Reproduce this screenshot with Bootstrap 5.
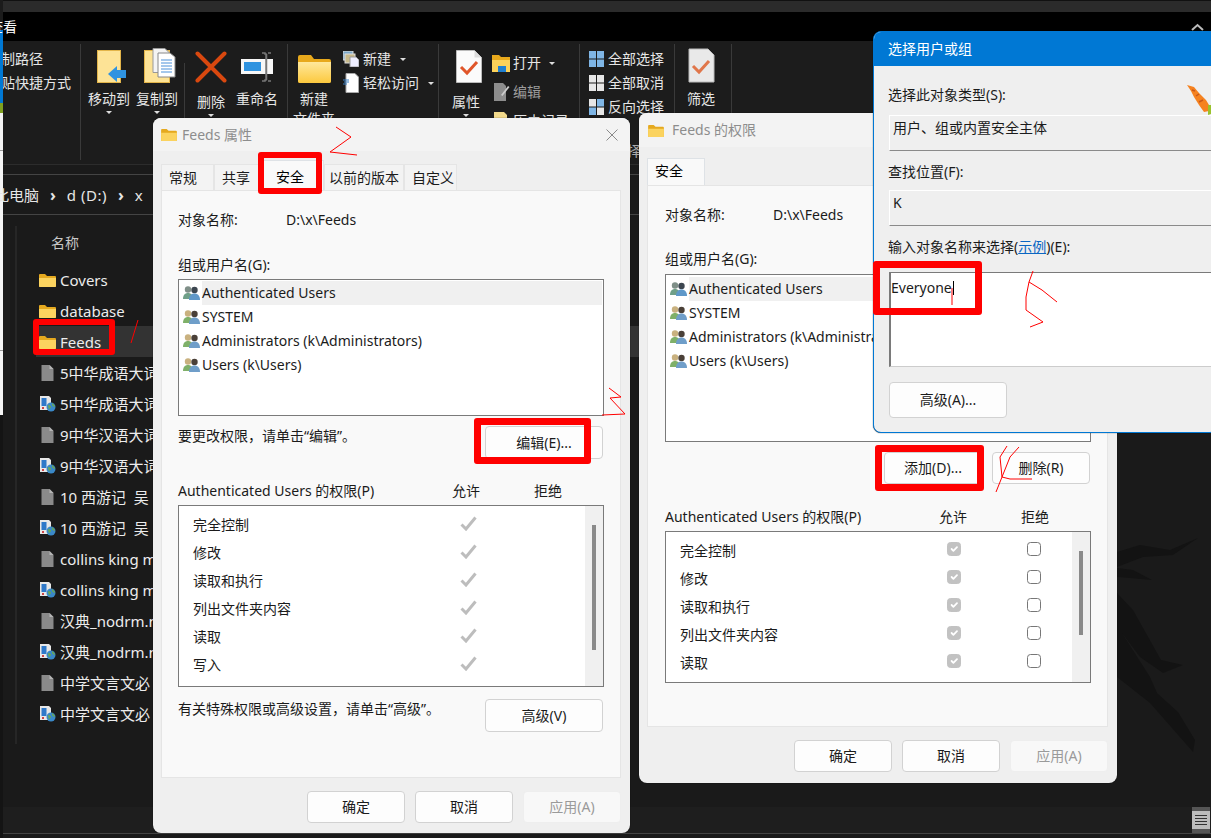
<!DOCTYPE html>
<html lang="zh-CN">
<head>
  <meta charset="UTF-8">
  <meta name="viewport" content="width=device-width, initial-scale=1.0">
  <title>Feeds 的权限</title>
  <link href="https://cdn.jsdelivr.net/npm/bootstrap@5.3.0/dist/css/bootstrap.min.css" rel="stylesheet">
  <style>
    html, body { height: 100%; }
    body {
      background: #1a1a1a;
      color: #1b1b1b;
      font: 14px/20px "Noto Sans", "Noto Sans CJK SC", sans-serif;
      overflow: hidden;
    }
    .desk { position: relative; width: 1211px; height: 838px; overflow: hidden; display: flex; }

    /* sliver of the window behind, at the left edge */
    .edge { width: 3px; flex: none; display: flex; flex-direction: column; background: #141414; }
    .edge i { display: block; }
    .e1 { height: 30px; background: #1b1b1b; }
    .e2 { height: 73px; background: #0078d4; }
    .e3 { height: 10px; background: #7fa020; }
    .e4 { height: 37px; background: #f4f4f4; }
    .e5 { height: 1px; background: #999; }
    .e6 { height: 199px; background: #f4f4f4; }
    .e7 { height: 1px; background: #999; }
    .e8 { height: 64px; background: #f4f4f4; }

    /* explorer */
    .explorer { flex: 1; display: flex; flex-direction: column; color: #e6e6e6; min-width: 0; }
    .ex-title { height: 12px; background: #2b2b2b; border-top: 1px solid #111; flex: none; }
    .ex-menu { height: 29px; background: #000; flex: none; display: flex; align-items: center; justify-content: space-between; padding-right: 7px; }
    .ex-menu span { margin-left: -14px; color: #fff; }
    .ex-ribbon { height: 124px; flex: none; background: #1c1c1c; display: flex; align-items: flex-start; border-bottom: 1px solid #2c2c2c; }
    .rb-group { margin-top: 3px; height: 116px; padding-top: 3px; border-right: 1px solid #3a3a3a; display: flex; flex: none; align-items: flex-start; }
    .g1 { width: 78px; overflow: hidden; display: block; white-space: nowrap; }
    .g1 div { height: 24px; line-height: 24px; margin-left: -16px; }
    .g2 { width: 207px; padding-left: 4px; }
    .g3 { width: 151px; padding-left: 2px; }
    .g4 { width: 141px; padding-left: 3px; }
    .g5 { width: 95px; padding-left: 9px; display: block; }
    .g6 { width: 57px; padding-left: 2px; }
    .rb-big { width: 48px; flex: none; display: flex; flex-direction: column; align-items: center; white-space: nowrap; }
    .rb-big.narrow { width: 44px; }
    .rb-ico { height: 38px; display: flex; align-items: flex-end; padding-bottom: 2px; }
    .rb-ico.nudge { padding-left: 5px; }
    .rb-lab { margin-top: 4px; line-height: 20px; }
    .rb-lab.low { margin-top: 7px; }
    .rb-caret { width: 0; height: 0; margin-top: 2px; border: 3px solid transparent; border-top-color: #ddd; border-bottom: 0; }
    .rb-caret.side { margin: 0 0 0 5px; }
    .rb-sub { width: 1px; height: 97px; margin: 16px 2px 0 3px; background: #3a3a3a; flex: none; }
    .rb-col { display: flex; flex-direction: column; white-space: nowrap; margin-left: 5px; }
    .rb-row { display: flex; align-items: center; height: 24px; gap: 4px; }
    .rb-col.tall { margin-left: 2px; margin-top: 2px; }
    .rb-col.tall .rb-row { height: 28px; gap: 3px; }
    .rb-col.tall .rb-row.mid { height: 30px; }
    .rb-row .muted { color: #9c9c9c; }
    .rb-cap { margin-top: 22px; margin-left: -9px; text-align: center; color: #aaa; }

    .ex-addr { margin-top: 9px; height: 41px; flex: none; border-top: 1px solid #444; border-bottom: 1px solid #444; display: flex; align-items: center; font-size: 15px; gap: 11px; white-space: nowrap; }
    .ex-addr span:first-child { margin-left: -9px; }
    .ex-addr span + b + span { letter-spacing: .5px; }
    .ex-addr b { font-weight: 700; font-size: 16px; }
    .ex-main { flex: 1; display: flex; min-height: 0; background: #1a1a1a; }
    .ex-nav { width: 12px; flex: none; margin-top: 11px; height: 518px; border-right: 2px solid #262626; box-sizing: content-box; }
    .ex-files { flex: 1; padding: 16px 0 0 19px; font-size: 15px; }
    .ex-head { height: 24px; line-height: 24px; padding-left: 15px; font-size: 14px; color: #c8c8c8; margin-bottom: 9px; }
    .ex-row { height: 31px; display: flex; align-items: center; padding-left: 3px; gap: 4px; }
    .ex-row.on { background: #333; }
    .ex-row svg { flex: none; }
    .ex-name { width: 93px; overflow: hidden; white-space: nowrap; color: #ececec; }
    .ex-status { height: 26px; flex: none; background: #1e1e1e; display: flex; justify-content: flex-end; padding-right: 1px; }
    .zoom-grip { width: 18px; height: 26px; background: #555; padding: 4px 0; }
    .zoom-grip div { height: 18px; background: #bdbdbd; display: flex; flex-direction: column; justify-content: center; gap: 2px; padding: 0 3px; }
    .zoom-grip i { display: block; height: 1px; background: #333; }
    .ex-foot { height: 5px; flex: none; border-top: 1px solid #444; }

    .wall { position: absolute; left: 0; top: 0; }

    /* dialogs */
    .dlg { position: absolute; background: #efefef; border-radius: 8px; display: flex; flex-direction: column; box-shadow: 0 0 1px #000; }
    .dlg-a { left: 153px; top: 118px; width: 477px; height: 715px; }
    .dlg-b { left: 639px; top: 113px; width: 478px; height: 670px; }
    .dlg-c { left: 873px; top: 31px; width: 345px; height: 402px; border: 1px solid #0078d4; }
    .dlg-bar { height: 33px; flex: none; background: #f3f3f3; display: flex; align-items: center; padding: 0 12px 0 8px; gap: 5px; color: #8d8d8d; border-radius: 8px 8px 0 0; }
    .dlg-b .dlg-bar { height: 34px; padding-left: 9px; gap: 8px; }
    .dlg-x { margin-left: auto; }
    .blue-bar { height: 34px; flex: none; background: #0078d4; color: #fff; padding: 7px 14px; border-radius: 7px 0 0 0; }
    .dlg-tabs { margin: 13px 8px 0; height: 26px; border: 0; flex-wrap: nowrap; flex: none; }
    .dlg-b .dlg-tabs { margin-top: 11px; height: 27px; }
    .dlg-tabs .nav-link { height: 26px; padding: 3px 0 0 7px; margin: 0; border: 1px solid #e5e5e5; border-bottom: 0; border-radius: 0; background: #f3f3f3; color: #1b1b1b; white-space: nowrap; }
    .dlg-tabs .nav-link.active { height: 30px; margin-top: -4px; padding: 6px 0 0 14px; background: #f9f9f9; position: relative; z-index: 1; }
    .dlg-b .dlg-tabs .nav-link.active { height: 27px; margin-top: 0; padding: 2px 0 0 7px; width: 58px; }
    .t-a { width: 53px; }
    .t-b { width: 47px; }
    .t-c { width: 63px; }
    .dlg-tabs .nav-link.t-d { width: 80px; padding-left: 4px; }
    .t-e { width: 53px; }
    .dlg-panel { margin: 0 9px 0 8px; background: #f9f9f9; border: 1px solid #e5e5e5; padding: 19px 16px 0; flex: none; }
    .dlg-a .dlg-panel { height: 588px; }
    .dlg-b .dlg-panel { height: 542px; padding-left: 17px; }
    .obj-row { display: flex; }
    .obj-row span:first-child { width: 108px; }
    .lab-gap { margin-top: 25px; }
    .dlg-b .lab-gap { margin-top: 24px; }
    .user-box { background: #fff; border: 1px solid #7a7a7a; margin-top: 4px; padding: 1px 1px 0 4px; height: 137px; }
    .dlg-b .user-box { height: 168px; margin-top: 5px; padding-top: 2px; }
    .user-row { height: 24px; display: flex; align-items: center; gap: 2px; }
    .user-row span { flex: 1; line-height: 24px; white-space: nowrap; }
    .user-row.on span { background: #f0f0f0; }
    .after-box { display: flex; justify-content: space-between; margin: 10px 1px 0 0; }
    .after-box.low { margin-top: 12px; }
    .add-row { display: flex; justify-content: flex-end; gap: 10px; margin: 10px 1px 0 0; }
    .dlg-btn { width: 118px; height: 33px; padding: 0; font-size: 14px; line-height: 20px; background: #fdfdfd; border: 1px solid #d2d2d2; border-radius: 4px; color: #1b1b1b; }
    .dlg-btn.foot { width: 98px; height: 32px; }
    .dlg-btn.disabled { background: #f8f8f8; border-color: #eee; color: #9a9a9a; opacity: 1; }
    .perm-head { display: flex; margin-top: 22px; }
    .dlg-b .perm-head { margin-top: 23px; }
    .perm-head span { flex: none; }
    .perm-head span:first-child { width: 274px; white-space: nowrap; }
    .perm-head span + span { width: 82px; }
    .perm-box { display: flex; background: #fff; border: 1px solid #7a7a7a; margin-top: 4px; }
    .dlg-a .perm-box { height: 182px; }
    .dlg-b .perm-box { height: 152px; }
    .perm-rows { flex: 1; padding-top: 5px; overflow: hidden; min-width: 0; }
    .perm-row { height: 28px; display: flex; align-items: center; }
    .perm-row span { width: 281px; flex: none; padding-left: 14px; }
    .perm-cell { width: 80px; flex: none; display: flex; }
    .perm-cell svg { margin-bottom: 4px; }
    .perm-check { width: 14px; height: 14px; margin: 0 0 4px; border: 1px solid #777; border-radius: 3px; opacity: 1 !important; background-color: #fff; }
    .perm-check:checked { background-color: #c2c2c2; border-color: #c2c2c2; }
    .perm-track { width: 18px; flex: none; background: #f0f0f0; padding: 19px 0 0 7px; }
    .perm-thumb { width: 4px; background: #8a8a8a; }
    .dlg-a .perm-thumb { height: 125px; }
    .dlg-b .perm-thumb { height: 84px; }
    .dlg-foot { display: flex; justify-content: flex-end; gap: 10px; padding-right: 9px; margin-top: 13px; }
    .dlg-body { padding: 19px 0 0 14px; white-space: nowrap; overflow: hidden; flex: 1; }
    .ro-field { margin: 10px 0 0 1px; height: 36px; padding: 2px 3px; border-left: 1px solid #fff; border-top: 1px solid #fff; border-bottom: 1px solid #8a8a8a; }
    .ro-field + .ro-lab { margin-top: 11px; }
    .ro-field.second { margin-top: 8px; }
    .name-box { margin: 15px 0 0 1px; height: 95px; background: #fff; border-top: 1px solid #7a7a7a; border-left: 2px solid #7a7a7a; border-bottom: 1px solid #ccc; padding: 5px 0 0; line-height: 20px; }
    .name-caret { display: inline-block; width: 1px; height: 14px; background: #000; vertical-align: -2px; margin-left: 1px; }
    .dlg-c .dlg-btn { display: block; height: 36px; margin: 15px 0 0 1px; }
    .sample-link { color: #0a66c2; text-decoration: underline; }
    .carrot { position: absolute; right: 6px; top: 52px; }

    /* red marks the author drew on the screenshot */
    .red-box { position: absolute; border: 7px solid #f00; border-radius: 3px; z-index: 5; }
    .r-tab { left: 258px; top: 152px; width: 64px; height: 42px; border-width: 6px; }
    .r-feeds { left: 33px; top: 319px; width: 82px; height: 36px; border-width: 6px; }
    .r-edit { left: 474px; top: 418px; width: 117px; height: 46px; }
    .r-name { left: 873px; top: 261px; width: 109px; height: 54px; }
    .r-add { left: 875px; top: 445px; width: 109px; height: 46px; }
    .scribble { position: absolute; left: 0; top: 0; z-index: 6; pointer-events: none; }
  </style>
</head>
<body>
  <svg width="0" height="0" class="d-block position-absolute">
    <defs>
      <linearGradient id="fy" x1="0" y1="0" x2="0" y2="1"><stop offset="0" stop-color="#ffe89c"/><stop offset="1" stop-color="#fcc93e"/></linearGradient>
      <symbol id="folder" viewBox="0 0 17 14">
        <path d="M0 2a1 1 0 0 1 1-1h5l2 2h8a1 1 0 0 1 1 1v9a1 1 0 0 1-1 1H1a1 1 0 0 1-1-1z" fill="#e5a91f"/>
        <path d="M0 5h17v8a1 1 0 0 1-1 1H1a1 1 0 0 1-1-1z" fill="#fbd35f"/>
      </symbol>
      <symbol id="plain" viewBox="0 0 14 16">
        <path d="M1 0h8l4 4v12H1z" fill="#8a8a8a"/><path d="M9 0l4 4H9z" fill="#b5b5b5"/>
      </symbol>
      <symbol id="webdoc" viewBox="0 0 17 16">
        <path d="M1 0h9l2 2v12H1z" fill="#e8e8e8"/><rect x="2.500" y="2" width="5" height="8" fill="#2f79c9"/><rect x="3" y="11" width="2" height="2" fill="#c44"/>
        <circle cx="12" cy="11" r="4.500" fill="#3a88c8"/><path d="M9 9c2 0 3 1 3 2s-2 1-2 3zM13 7c1 1 3 2 3 4-1 0-2-1-3-2z" fill="#6aa84f"/>
      </symbol>
      <symbol id="users" viewBox="0 0 17 16">
        <circle cx="5" cy="4.500" r="3.200" fill="#c9b17f"/><path d="M0 14c0-4 2-6 5-6s5 2 5 6z" fill="#7fb069"/>
        <circle cx="11.500" cy="5" r="3.200" fill="#4a4038"/><path d="M6 15c0-4 2-6.500 5.500-6.500S17 11 17 15z" fill="#6f9ec9"/>
      </symbol>
      <symbol id="usersg" viewBox="0 0 17 16">
        <circle cx="5" cy="4.500" r="3.200" fill="#7f8f88"/><path d="M0 14c0-4 2-6 5-6s5 2 5 6z" fill="#6f9f88"/>
        <circle cx="11.500" cy="5" r="3.200" fill="#3c4650"/><path d="M6 15c0-4 2-6.500 5.500-6.500S17 11 17 15z" fill="#5f98c9"/>
      </symbol>
      <symbol id="tick" viewBox="0 0 17 15">
        <path d="M1.500 8.500l4.500 4.500L15.500 1.500" fill="none" stroke="#bdbdbd" stroke-width="3"/>
      </symbol>
      <symbol id="closex" viewBox="0 0 12 12">
        <path d="M.5.500l11 11M11.500.500l-11 11" stroke="#8a8a8a" fill="none"/>
      </symbol>
    </defs>
  </svg>

  <div class="desk">
    <div class="edge">
      <i class="e1"></i><i class="e2"></i><i class="e3"></i><i class="e4"></i><i class="e5"></i><i class="e6"></i><i class="e7"></i><i class="e8"></i>
    </div>

    <div class="explorer">
      <div class="ex-title"></div>
      <div class="ex-menu">
        <span>查看</span>
        <svg width="13" height="8" viewBox="0 0 13 8"><path d="M1 7l5.500-5L12 7" fill="none" stroke="#bbb" stroke-width="2"/></svg>
      </div>

      <div class="ex-ribbon">
        <div class="rb-group g1">
          <div>复制路径</div>
          <div>粘贴快捷方式</div>
        </div>

        <div class="rb-group g2">
          <div class="rb-big">
            <div class="rb-ico nudge">
              <svg width="30" height="33" viewBox="0 0 30 33"><rect x=".5" y=".5" width="23" height="32" fill="#fde396" stroke="#e3b54a"/><path d="M11 24l9-8v4h9v8h-9v4z" fill="#2f93e0"/></svg>
            </div>
            <div class="rb-lab">移动到</div>
            <div class="rb-caret"></div>
          </div>
          <div class="rb-big">
            <div class="rb-ico nudge">
              <svg width="32" height="35" viewBox="0 0 32 35"><rect x=".5" y="2.500" width="25" height="32" fill="#fde396" stroke="#e3b54a"/><path d="M9 .5h12l4 4v20H9z" fill="#f4f4f4" stroke="#999"/><path d="M14 5h12l5 4v20H14z" fill="#fff" stroke="#888"/><path d="M17 12h11M17 15h11M17 18h11M17 21h11M17 24h11" stroke="#4a90d9"/></svg>
            </div>
            <div class="rb-lab">复制到</div>
            <div class="rb-caret"></div>
          </div>
          <div class="rb-sub"></div>
          <div class="rb-big">
            <div class="rb-ico">
              <svg width="32" height="32" viewBox="0 0 32 32"><path d="M2.500 2.500l27 27M29.500 2.500l-27 27" stroke="#d9480f" stroke-width="4" stroke-linecap="round" fill="none"/></svg>
            </div>
            <div class="rb-lab low">删除</div>
            <div class="rb-caret"></div>
          </div>
          <div class="rb-big narrow">
            <div class="rb-ico">
              <svg width="32" height="31" viewBox="0 0 32 31"><rect x="0" y="7" width="32" height="15" fill="#f7f7f7"/><rect x="3" y="10" width="17" height="9" fill="#2f93e0"/><path d="M21 1h3v1h1v26h-1v1h-3M27 1h3M27 29h3M25.500 2v26" stroke="#777" fill="none" stroke-width="1.500"/></svg>
            </div>
            <div class="rb-lab">重命名</div>
          </div>
        </div>

        <div class="rb-group g3">
          <div class="rb-big">
            <div class="rb-ico">
              <svg width="33" height="28" viewBox="0 0 33 28"><path d="M0 2a2 2 0 0 1 2-2h11l3 4h15a2 2 0 0 1 2 2v20a2 2 0 0 1-2 2H2a2 2 0 0 1-2-2z" fill="#e8a91c"/><path d="M0 7h33v19a2 2 0 0 1-2 2H2a2 2 0 0 1-2-2z" fill="url(#fy)"/></svg>
            </div>
            <div class="rb-lab">新建</div>
            <div class="rb-lab mt-0">文件夹</div>
          </div>
          <div class="rb-col">
            <div class="rb-row">
              <svg width="16" height="16" viewBox="0 0 16 16"><rect x="0" y="0" width="10" height="9" fill="#7aa7c7" stroke="#ddd"/><rect x="2" y="3" width="10" height="9" fill="#c7b98a" stroke="#ddd"/><path d="M7 6h6l3 3v7H7z" fill="#eef" stroke="#999"/></svg>
              <span>新建</span><i class="rb-caret side"></i>
            </div>
            <div class="rb-row">
              <svg width="16" height="20" viewBox="0 0 16 20"><path d="M3 .5h9l3.500 3.500v15.500H3z" fill="#fff" stroke="#aaa"/><path d="M0 7h6M1 9h5M0 11h4" stroke="#3a82c8"/></svg>
              <span>轻松访问</span><i class="rb-caret side"></i>
            </div>
          </div>
        </div>

        <div class="rb-group g4">
          <div class="rb-big">
            <div class="rb-ico nudge">
              <svg width="26" height="33" viewBox="0 0 26 33"><path d="M.5.500h18l7 7v25H.5z" fill="#fbfbfb" stroke="#bbb"/><path d="M18.500.5l7 7h-7z" fill="#ddd"/><path d="M5 17l6 6L21 12" fill="none" stroke="#e0562a" stroke-width="3"/></svg>
            </div>
            <div class="rb-lab low">属性</div>
            <div class="rb-caret"></div>
          </div>
          <div class="rb-col tall">
            <div class="rb-row">
              <svg width="18" height="18" viewBox="0 0 18 18"><path d="M0 1h7l2 2h9v15H0z" fill="#e8a91c"/><path d="M0 6h18v12H0z" fill="#fcd25a"/><rect x="6" y="12" width="8" height="6" fill="#1f7fd0"/></svg>
              <span>打开</span><i class="rb-caret side"></i>
            </div>
            <div class="rb-row mid">
              <svg width="18" height="18" viewBox="0 0 18 18"><path d="M2 0h9l3 3v15H2z" fill="#8d8d8d"/><path d="M9 12l7-9 1.500 1-7 9z" fill="#ccc"/></svg>
              <span class="muted">编辑</span>
            </div>
            <div class="rb-row">
              <svg width="18" height="18" viewBox="0 0 18 18"><path d="M2 0h10l3 3v15H2z" fill="#f1d88a"/></svg>
              <span>历史记录</span>
            </div>
          </div>
        </div>

        <div class="rb-group g5">
          <div class="rb-row">
            <svg width="15" height="16" viewBox="0 0 15 16"><path d="M0 0h7v7.500H0zM8 0h7v7.500H8zM0 8.500h7V16H0zM8 8.500h7V16H8z" fill="#7fb6e6"/></svg>
            <span>全部选择</span>
          </div>
          <div class="rb-row">
            <svg width="15" height="16" viewBox="0 0 15 16"><path d="M0 0h7v7.500H0zM8 0h7v7.500H8zM0 8.500h7V16H0zM8 8.500h7V16H8z" fill="#e6e6e6"/></svg>
            <span>全部取消</span>
          </div>
          <div class="rb-row">
            <svg width="15" height="16" viewBox="0 0 15 16"><path d="M0 0h7v7.500H0zM8 8.500h7V16H8z" fill="#e6e6e6"/><path d="M8 0h7v7.500H8zM0 8.500h7V16H0z" fill="#7fb6e6"/></svg>
            <span>反向选择</span>
          </div>
          <div class="rb-cap">选择</div>
        </div>

        <div class="rb-group g6">
          <div class="rb-big">
            <div class="rb-ico">
              <svg width="27" height="35" viewBox="0 0 27 35"><path d="M1 1h19l6 6v27H1z" fill="#e9e9e9" stroke="#bbb"/><path d="M5 18l6 6L21 13" fill="none" stroke="#e0764a" stroke-width="3"/></svg>
            </div>
            <div class="rb-lab">筛选</div>
          </div>
        </div>
      </div>

      <div class="ex-addr">
        <span>此电脑</span><b>›</b><span>d (D:)</span><b>›</b><span>x</span>
      </div>

      <div class="ex-main">
        <div class="ex-nav"></div>
        <div class="ex-files">
          <div class="ex-head">名称</div>
          <div class="ex-row"><svg width="17" height="14"><use href="#folder"/></svg><div class="ex-name">Covers</div></div>
          <div class="ex-row"><svg width="17" height="14"><use href="#folder"/></svg><div class="ex-name">database</div></div>
          <div class="ex-row on"><svg width="17" height="14"><use href="#folder"/></svg><div class="ex-name">Feeds</div></div>
          <div class="ex-row"><svg width="17" height="16"><use href="#plain"/></svg><div class="ex-name">5中华成语大词</div></div>
          <div class="ex-row"><svg width="17" height="16"><use href="#webdoc"/></svg><div class="ex-name">5中华成语大词</div></div>
          <div class="ex-row"><svg width="17" height="16"><use href="#plain"/></svg><div class="ex-name">9中华汉语大词</div></div>
          <div class="ex-row"><svg width="17" height="16"><use href="#webdoc"/></svg><div class="ex-name">9中华汉语大词</div></div>
          <div class="ex-row"><svg width="17" height="16"><use href="#plain"/></svg><div class="ex-name">10 西游记&nbsp;&nbsp;吴</div></div>
          <div class="ex-row"><svg width="17" height="16"><use href="#webdoc"/></svg><div class="ex-name">10 西游记&nbsp;&nbsp;吴</div></div>
          <div class="ex-row"><svg width="17" height="16"><use href="#plain"/></svg><div class="ex-name">collins king m</div></div>
          <div class="ex-row"><svg width="17" height="16"><use href="#webdoc"/></svg><div class="ex-name">collins king m</div></div>
          <div class="ex-row"><svg width="17" height="16"><use href="#plain"/></svg><div class="ex-name">汉典_nodrm.m</div></div>
          <div class="ex-row"><svg width="17" height="16"><use href="#webdoc"/></svg><div class="ex-name">汉典_nodrm.m</div></div>
          <div class="ex-row"><svg width="17" height="16"><use href="#plain"/></svg><div class="ex-name">中学文言文必</div></div>
          <div class="ex-row"><svg width="17" height="16"><use href="#webdoc"/></svg><div class="ex-name">中学文言文必</div></div>
        </div>
      </div>
      <div class="ex-status">
        <div class="zoom-grip"><div><i></i><i></i><i></i><i></i></div></div>
      </div>
      <div class="ex-foot"></div>
    </div>

    <!-- wallpaper showing through on the right -->
    <svg class="wall" width="1211" height="838" viewBox="0 0 1211 838">
      <g fill="#131313">
        <path d="M1090 556L1117 552 1140 545 1170 550 1198 538 1173 555 1143 557 1117 567 1090 575z"/>
        <path d="M1117 568L1133 570 1152 580 1130 578 1117 577z"/>
        <path d="M1117 593L1133 610 1161 660 1183 665 1163 673 1140 657 1122 633 1150 677 1157 693 1178 712 1195 740 1193 752 1150 703 1117 677z"/>
      </g>
    </svg>

    <!-- 属性 -->
    <div class="dlg dlg-a">
      <div class="dlg-bar">
        <svg width="16" height="13"><use href="#folder"/></svg>
        <span>Feeds 属性</span>
        <svg class="dlg-x" width="12" height="12"><use href="#closex"/></svg>
      </div>
      <ul class="nav nav-tabs dlg-tabs">
        <li class="nav-item"><a class="nav-link t-a" href="#">常规</a></li>
        <li class="nav-item"><a class="nav-link t-b" href="#">共享</a></li>
        <li class="nav-item"><a class="nav-link active t-c" href="#">安全</a></li>
        <li class="nav-item"><a class="nav-link t-d" href="#">以前的版本</a></li>
        <li class="nav-item"><a class="nav-link t-e" href="#">自定义</a></li>
      </ul>
      <div class="dlg-panel">
        <div class="obj-row"><span>对象名称:</span><span>D:\x\Feeds</span></div>
        <div class="lab-gap">组或用户名(G):</div>
        <div class="user-box">
          <div class="user-row on"><svg width="17" height="16"><use href="#usersg"/></svg><span>Authenticated Users</span></div>
          <div class="user-row"><svg width="17" height="16"><use href="#users"/></svg><span>SYSTEM</span></div>
          <div class="user-row"><svg width="17" height="16"><use href="#users"/></svg><span>Administrators (k\Administrators)</span></div>
          <div class="user-row"><svg width="17" height="16"><use href="#users"/></svg><span>Users (k\Users)</span></div>
        </div>
        <div class="after-box">
          <div>要更改权限，请单击“编辑”。</div>
          <button type="button" class="btn dlg-btn">编辑(E)...</button>
        </div>
        <div class="perm-head"><span>Authenticated Users 的权限(P)</span><span>允许</span><span>拒绝</span></div>
        <div class="perm-box">
          <div class="perm-rows">
            <div class="perm-row"><span>完全控制</span><div class="perm-cell"><svg width="17" height="15"><use href="#tick"/></svg></div></div>
            <div class="perm-row"><span>修改</span><div class="perm-cell"><svg width="17" height="15"><use href="#tick"/></svg></div></div>
            <div class="perm-row"><span>读取和执行</span><div class="perm-cell"><svg width="17" height="15"><use href="#tick"/></svg></div></div>
            <div class="perm-row"><span>列出文件夹内容</span><div class="perm-cell"><svg width="17" height="15"><use href="#tick"/></svg></div></div>
            <div class="perm-row"><span>读取</span><div class="perm-cell"><svg width="17" height="15"><use href="#tick"/></svg></div></div>
            <div class="perm-row"><span>写入</span><div class="perm-cell"><svg width="17" height="15"><use href="#tick"/></svg></div></div>
          </div>
          <div class="perm-track"><div class="perm-thumb"></div></div>
        </div>
        <div class="after-box low">
          <div>有关特殊权限或高级设置，请单击“高级”。</div>
          <button type="button" class="btn dlg-btn">高级(V)</button>
        </div>
      </div>
      <div class="dlg-foot">
        <button type="button" class="btn dlg-btn foot">确定</button>
        <button type="button" class="btn dlg-btn foot">取消</button>
        <button type="button" class="btn dlg-btn foot disabled">应用(A)</button>
      </div>
    </div>

    <!-- 权限 -->
    <div class="dlg dlg-b">
      <div class="dlg-bar">
        <svg width="16" height="13"><use href="#folder"/></svg>
        <span>Feeds 的权限</span>
      </div>
      <ul class="nav nav-tabs dlg-tabs">
        <li class="nav-item"><a class="nav-link active" href="#">安全</a></li>
      </ul>
      <div class="dlg-panel">
        <div class="obj-row"><span>对象名称:</span><span>D:\x\Feeds</span></div>
        <div class="lab-gap">组或用户名(G):</div>
        <div class="user-box">
          <div class="user-row on"><svg width="17" height="16"><use href="#usersg"/></svg><span>Authenticated Users</span></div>
          <div class="user-row"><svg width="17" height="16"><use href="#users"/></svg><span>SYSTEM</span></div>
          <div class="user-row"><svg width="17" height="16"><use href="#users"/></svg><span>Administrators (k\Administrators)</span></div>
          <div class="user-row"><svg width="17" height="16"><use href="#users"/></svg><span>Users (k\Users)</span></div>
        </div>
        <div class="add-row">
          <button type="button" class="btn dlg-btn foot">添加(D)...</button>
          <button type="button" class="btn dlg-btn foot">删除(R)</button>
        </div>
        <div class="perm-head"><span>Authenticated Users 的权限(P)</span><span>允许</span><span>拒绝</span></div>
        <div class="perm-box">
          <div class="perm-rows">
            <div class="perm-row"><span>完全控制</span><div class="perm-cell"><input class="form-check-input perm-check" type="checkbox" checked disabled></div><div class="perm-cell"><input class="form-check-input perm-check" type="checkbox" disabled></div></div>
            <div class="perm-row"><span>修改</span><div class="perm-cell"><input class="form-check-input perm-check" type="checkbox" checked disabled></div><div class="perm-cell"><input class="form-check-input perm-check" type="checkbox" disabled></div></div>
            <div class="perm-row"><span>读取和执行</span><div class="perm-cell"><input class="form-check-input perm-check" type="checkbox" checked disabled></div><div class="perm-cell"><input class="form-check-input perm-check" type="checkbox" disabled></div></div>
            <div class="perm-row"><span>列出文件夹内容</span><div class="perm-cell"><input class="form-check-input perm-check" type="checkbox" checked disabled></div><div class="perm-cell"><input class="form-check-input perm-check" type="checkbox" disabled></div></div>
            <div class="perm-row"><span>读取</span><div class="perm-cell"><input class="form-check-input perm-check" type="checkbox" checked disabled></div><div class="perm-cell"><input class="form-check-input perm-check" type="checkbox" disabled></div></div>
          </div>
          <div class="perm-track"><div class="perm-thumb"></div></div>
        </div>
      </div>
      <div class="dlg-foot">
        <button type="button" class="btn dlg-btn foot">确定</button>
        <button type="button" class="btn dlg-btn foot">取消</button>
        <button type="button" class="btn dlg-btn foot disabled">应用(A)</button>
      </div>
    </div>

    <!-- 选择用户或组 -->
    <div class="dlg dlg-c">
      <div class="blue-bar">选择用户或组</div>
      <div class="dlg-body">
        <div class="ro-lab">选择此对象类型(S):</div>
        <div class="ro-field">用户、组或内置安全主体</div>
        <div class="ro-lab">查找位置(F):</div>
        <div class="ro-field second">K</div>
        <div class="ro-lab">输入对象名称来选择(<a class="sample-link" href="#">示例</a>)(E):</div>
        <div class="name-box">Everyone<span class="name-caret"></span></div>
        <button type="button" class="btn dlg-btn">高级(A)...</button>
      </div>
      <svg class="carrot" width="24" height="32" viewBox="0 0 24 32">
        <path d="M0 1l7 2 5 6 7 7 3 5 0 6-5 1-5-7-5-8-3-6z" fill="#f58220"/>
        <path d="M5 6l3 1M9 12l3-2M12 18l4-2" stroke="#c9581a" stroke-width="1.500"/>
        <path d="M21 21h3v9l-3 1z" fill="#9ac22c"/>
      </svg>
    </div>

    <div class="red-box r-tab"></div>
    <div class="red-box r-feeds"></div>
    <div class="red-box r-edit"></div>
    <div class="red-box r-name"></div>
    <div class="red-box r-add"></div>

    <svg class="scribble" width="1211" height="838" viewBox="0 0 1211 838" fill="none" stroke="#f00">
      <path d="M336 127L351 137 330 152 357 155"/>
      <path d="M138 320L131 343"/>
      <path d="M609 388L621 397 610 398 625 414 602 415"/>
      <path d="M1033 271L1029 282 1026 297 1026 310 1043 322 1030 327"/>
      <path d="M1029 282L1042 290 1057 302"/>
      <path d="M952 288V305"/>
      <path d="M1007 446L1000 457 1002 477 996 492"/>
      <path d="M1019 447L1010 457 1002 477 1010 479 1032 479"/>
    </svg>
  </div>

  <script src="https://cdn.jsdelivr.net/npm/bootstrap@5.3.0/dist/js/bootstrap.bundle.min.js"></script>
</body>
</html>
